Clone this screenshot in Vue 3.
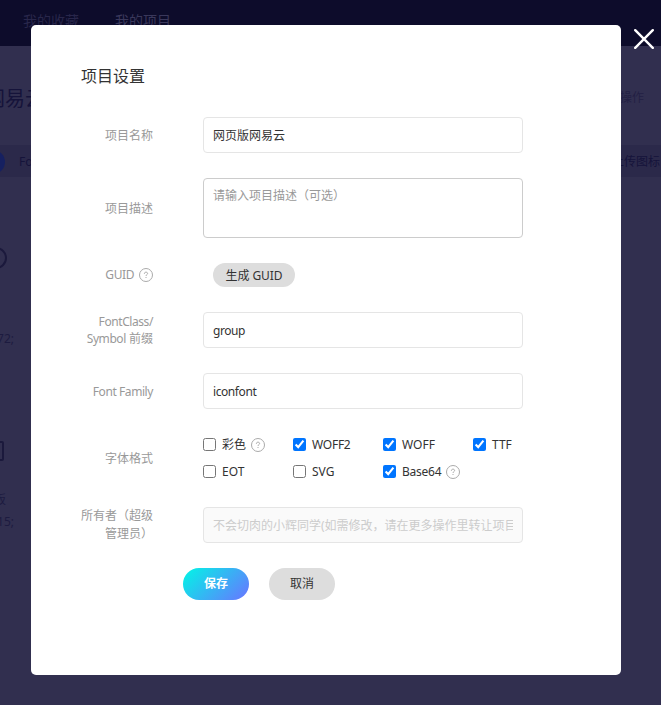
<script setup>
import { ref, reactive } from 'vue'

const name = ref('网页版网易云')
const description = ref('')
const prefix = ref('group')
const family = ref('iconfont')
const owner = ref('不会切肉的小辉同学(如需修改，请在更多操作里转让项目)')

const formats = reactive([
  { label: '彩色', checked: false, help: true },
  { label: 'WOFF2', checked: true, help: false },
  { label: 'WOFF', checked: true, help: false },
  { label: 'TTF', checked: true, help: false },
  { label: 'EOT', checked: false, help: false },
  { label: 'SVG', checked: false, help: false },
  { label: 'Base64', checked: true, help: true },
])
</script>

<template>
  <div class="screen">
    <div class="page">
      <nav class="topbar">
        <span>我的收藏</span>
        <span class="current">我的项目</span>
      </nav>
      <div class="heading">
        <h1>网易云</h1>
        <span class="more">更多操作</span>
      </div>
      <div class="toolbar">
        <i class="pill"></i>
        <span>Font class</span>
        <span class="upload">上传图标</span>
      </div>
      <div class="icons">
        <div class="glyph round"></div>
        <p class="code first">72;</p>
        <div class="glyph square"></div>
        <p class="caption">板</p>
        <p class="code">15;</p>
      </div>
    </div>

    <div class="overlay">
      <section class="dialog">
        <h2>项目设置</h2>
        <form @submit.prevent>
          <div class="row">
            <label class="name">项目名称</label>
            <input v-model="name" class="field" type="text" />
          </div>
          <div class="row">
            <label class="name">项目描述</label>
            <textarea v-model="description" class="field area" placeholder="请输入项目描述（可选）"></textarea>
          </div>
          <div class="row">
            <label class="name guid"><span class="latin">GUID</span>
              <svg class="help" viewBox="0 0 14 14"><circle cx="7" cy="7" r="6.5" /><path d="M5.4 5.8C5.4 4.7 6 4.2 7 4.2s1.6.5 1.6 1.4C8.6 6.6 7 6.7 7 8M7 9v1" /></svg>
            </label>
            <button class="generate" type="button">生成 GUID</button>
          </div>
          <div class="row">
            <label class="name tight"><span class="latin">FontClass/</span><br /><span class="latin">Symbol</span> 前缀</label>
            <input v-model="prefix" class="field latin" type="text" />
          </div>
          <div class="row">
            <label class="name latin">Font Family</label>
            <input v-model="family" class="field latin" type="text" />
          </div>
          <div class="row">
            <label class="name">字体格式</label>
            <div class="formats">
              <label v-for="item in formats" :key="item.label" class="format">
                <input v-model="item.checked" type="checkbox" />
                <span :class="{ snug: item.label === 'WOFF2' || item.label === 'Base64' }">{{ item.label }}</span>
                <svg v-if="item.help" class="help" viewBox="0 0 14 14"><circle cx="7" cy="7" r="6.5" /><path d="M5.4 5.8C5.4 4.7 6 4.2 7 4.2s1.6.5 1.6 1.4C8.6 6.6 7 6.7 7 8M7 9v1" /></svg>
              </label>
            </div>
          </div>
          <div class="row">
            <label class="name owner">所有者（超级<br />管理员）</label>
            <input v-model="owner" class="field" type="text" disabled />
          </div>
          <div class="actions">
            <button class="save" type="submit">保存</button>
            <button type="button">取消</button>
          </div>
        </form>
      </section>
      <svg class="close" viewBox="0 0 20 20"><path d="M1.2 1.2 18.8 18.8M18.8 1.2 1.2 18.8" /></svg>
    </div>
  </div>
</template>

<style>
body { margin: 0; }
</style>

<style scoped>
* { box-sizing: border-box; }
.screen {
  position: relative;
  width: 661px;
  height: 705px;
  overflow: hidden;
  background: #312f4f;
  color: #333;
  font: 12px/18px "Noto Sans", "Noto Sans CJK SC", sans-serif;
}
h1, h2, p { margin: 0; font-weight: 400; }
.page { color: #15133a; }
.topbar {
  display: flex;
  gap: 36px;
  height: 46px;
  padding: 10px 0 0 23px;
  background: #0d0c2b;
  color: #28264a;
  font-size: 14px;
  line-height: 22px;
}
.current { color: #3a385b; }
.heading {
  display: flex;
  align-items: center;
  justify-content: space-between;
  height: 99px;
  padding: 5px 17px 0 0;
}
h1 { margin-left: -15px; padding-top: 2px; font-size: 20px; line-height: 28px; }
.more { color: #232044; }
.toolbar {
  display: flex;
  align-items: center;
  height: 32px;
  padding-top: 1px;
  background: #2b294a;
}
.pill {
  width: 55px;
  height: 24px;
  margin: 0 14px 0 -50px;
  border-radius: 12px;
  background: #162060;
}
.upload { margin-left: auto; padding-right: 1px; }
.icons {
  display: flex;
  flex-direction: column;
  align-items: flex-end;
  width: 14px;
  padding-top: 70px;
  color: #1d1b40;
}
.glyph { flex: none; border: 1.5px solid #1b193c; border-width: 2px; }
.round { width: 22px; height: 22px; margin-right: 7px; border-radius: 50%; }
.first { margin: 61px 0 93px; }
.square { width: 20px; height: 20px; margin-right: 10px; border-radius: 2px; }
.caption { margin: 30px 8px 4px 0; }

.overlay { position: absolute; inset: 0; padding: 25px 0 0 31px; }
.dialog {
  width: 590px;
  height: 650px;
  padding: 40px 50px;
  border-radius: 5px;
  background: #fff;
}
.close {
  position: absolute;
  left: 634px;
  top: 29px;
  width: 20px;
  height: 20px;
  fill: none;
  stroke: #fff;
  stroke-width: 2.4;
  stroke-linecap: round;
}
h2 { margin: -1px 0 29px; font-size: 16px; line-height: 24px; }
form { display: flex; flex-direction: column; gap: 25px; }
.row { display: flex; align-items: center; gap: 50px; }
.name {
  flex: none;
  width: 72px;
  padding-top: 2px;
  color: #999;
  text-align: right;
  white-space: nowrap;
}
.latin { letter-spacing: -0.42px; }
.snug { letter-spacing: -0.25px; }
.guid { display: flex; align-items: center; justify-content: flex-end; gap: 5px; padding-top: 0; }
.tight { padding-top: 0; line-height: 17px; }
.owner { margin: -1px 0; padding-top: 0; line-height: 18px; }
.field {
  display: block;
  width: 320px;
  height: 36px;
  padding: 0 9px;
  border: 1px solid #e5e5e5;
  border-radius: 4px;
  outline: 0;
  background: #fff;
  color: #333;
  font: inherit;
}
.area { height: 60px; padding-top: 8px; border-color: #ccc; resize: none; }
.area::placeholder { color: #999; }
.field:disabled { background: #fafafa; color: #ccc; }
button {
  height: 32px;
  width: 66px;
  padding: 0;
  border: 0;
  border-radius: 16px;
  background: #ddd;
  color: #333;
  font: inherit;
}
.generate { width: 82px; height: 24px; padding-top: 1px; margin-left: 10px; letter-spacing: -0.1px; }
.help { flex: none; width: 14px; height: 14px; fill: none; stroke: #aaa; stroke-width: 1; }
.formats {
  display: grid;
  grid-template-columns: repeat(4, 90px);
  grid-auto-rows: 21px;
  row-gap: 6px;
  height: 48px;
}
.format { display: flex; align-items: center; white-space: nowrap; }
.format input { width: 13px; height: 13px; margin: 0 6px 0 0; accent-color: #0075ff; }
.format .help { margin-left: 5px; }
.actions { display: flex; gap: 20px; margin-left: 102px; }
.save { background: linear-gradient(135deg, #00f7e6, #657aff 95%); color: #fff; font-weight: 600; }
</style>
